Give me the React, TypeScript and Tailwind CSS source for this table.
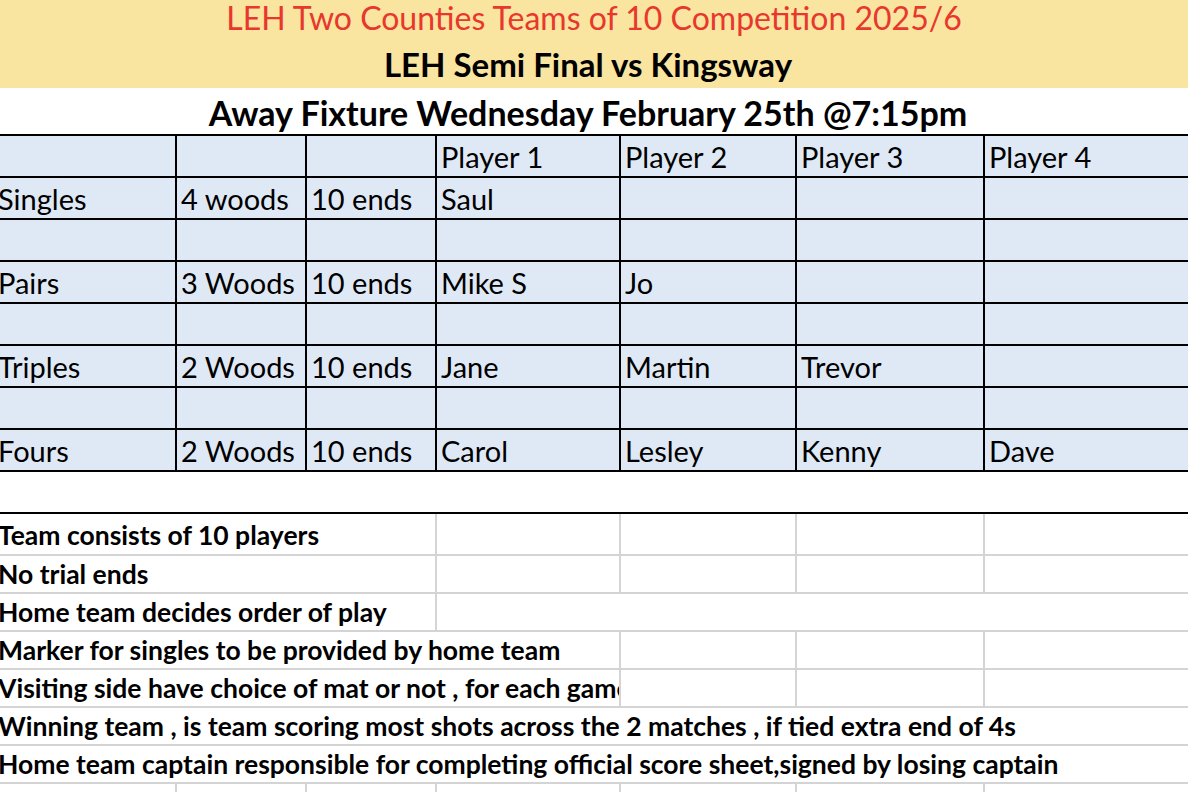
import React from 'react';

const grid = 'grid grid-cols-[183px_130px_130px_184px_176px_188px_1fr]';

const fixtures = [
  { kind: 'Singles', woods: '4 woods', ends: '10 ends', players: ['Saul', '', '', ''] },
  { kind: 'Pairs', woods: '3 Woods', ends: '10 ends', players: ['Mike S', 'Jo', '', ''] },
  { kind: 'Triples', woods: '2 Woods', ends: '10 ends', players: ['Jane', 'Martin', 'Trevor', ''] },
  { kind: 'Fours', woods: '2 Woods', ends: '10 ends', players: ['Carol', 'Lesley', 'Kenny', 'Dave'] },
];

const Cell: React.FC<{ children?: React.ReactNode; last?: boolean }> = ({ children, last }) => (
  <div
    className={`h-[42px] border-b-2 border-black ${last ? '' : 'border-r-2'} flex items-end pb-[5px] pl-[4px] whitespace-nowrap overflow-hidden`}
  >
    {children}
  </div>
);

const TableRow: React.FC<{ cells: string[] }> = ({ cells }) => (
  <div className={grid}>
    {cells.map((c, i) => (
      <Cell key={i} last={i === cells.length - 1}>
        {c}
      </Cell>
    ))}
  </div>
);

// a note row is made of parts; each part spans some columns and may have a gridline on its right
type Part = { span: number; text?: string; line?: boolean };

const spanClass: Record<number, string> = {
  1: 'col-span-1',
  2: 'col-span-2',
  3: 'col-span-3',
  4: 'col-span-4',
  7: 'col-span-7',
};

const NoteRow: React.FC<{ parts: Part[]; tall?: boolean }> = ({ parts, tall }) => (
  <div className={grid}>
    {parts.map((p, i) => (
      <div
        key={i}
        className={`${spanClass[p.span]} ${tall ? 'h-[42px] pb-[6px]' : 'h-[38px] pb-[5px]'} border-b-2 border-[#d4d4d4] ${
          p.line ? 'border-r-2' : ''
        } flex items-end pl-[4px] whitespace-nowrap overflow-hidden font-bold text-[26.5px]`}
      >
        {p.text}
      </div>
    ))}
  </div>
);

const boxes = (n: number): Part[] =>
  Array.from({ length: n }, (_, i) => ({ span: 1, line: i < n - 1 }));

export default function App() {
  return (
    <div className="w-[1188px] h-[792px] overflow-hidden bg-white text-black font-[family-name:Lato,sans-serif]">
      {/* Heading */}
      <div className="bg-[#f9e4a0]">
        <div className="h-[44px] flex items-start justify-center pt-[2px] text-[32px] text-[#e8372c] leading-none">
          LEH Two Counties Teams of 10 Competition 2025/6
        </div>
        <div className="h-[44px] flex items-start justify-center pt-[4px] pr-[12px] text-[33px] font-bold leading-none">
          LEH Semi Final vs Kingsway
        </div>
      </div>
      <div className="h-[46px] flex items-start justify-center pt-[8px] pr-[12px] text-[34px] font-bold leading-none">
        Away Fixture Wednesday February 25th @7:15pm
      </div>

      {/* Fixture grid */}
      <div className="-ml-[6px] border-t-2 border-black bg-[#dfe9f5] text-[29px] leading-none">
        <TableRow cells={['', '', '', 'Player 1', 'Player 2', 'Player 3', 'Player 4']} />
        {fixtures.map((f, i) => (
          <React.Fragment key={f.kind}>
            <TableRow cells={[f.kind, f.woods, f.ends, ...f.players]} />
            {i < fixtures.length - 1 && <TableRow cells={['', '', '', '', '', '', '']} />}
          </React.Fragment>
        ))}
      </div>

      <div className="h-[42px] border-b-2 border-black" />

      {/* Rules */}
      <div className="-ml-[6px] leading-none">
        <NoteRow tall parts={[{ span: 3, text: 'Team consists of 10 players', line: true }, ...boxes(4)]} />
        <NoteRow parts={[{ span: 3, text: 'No trial ends', line: true }, ...boxes(4)]} />
        <NoteRow parts={[{ span: 3, text: 'Home team decides order of play', line: true }, { span: 4 }]} />
        <NoteRow parts={[{ span: 4, text: 'Marker for singles to be provided by home team', line: true }, ...boxes(3)]} />
        <NoteRow
          parts={[{ span: 4, text: 'Visiting side have choice of mat or not , for each game', line: true }, ...boxes(3)]}
        />
        <NoteRow
          parts={[{ span: 7, text: 'Winning team , is team scoring most shots across the 2 matches , if tied extra end of 4s' }]}
        />
        <NoteRow
          parts={[{ span: 7, text: 'Home team captain responsible for completing official score sheet,signed by losing captain' }]}
        />
        <NoteRow parts={boxes(7)} />
      </div>
    </div>
  );
}
